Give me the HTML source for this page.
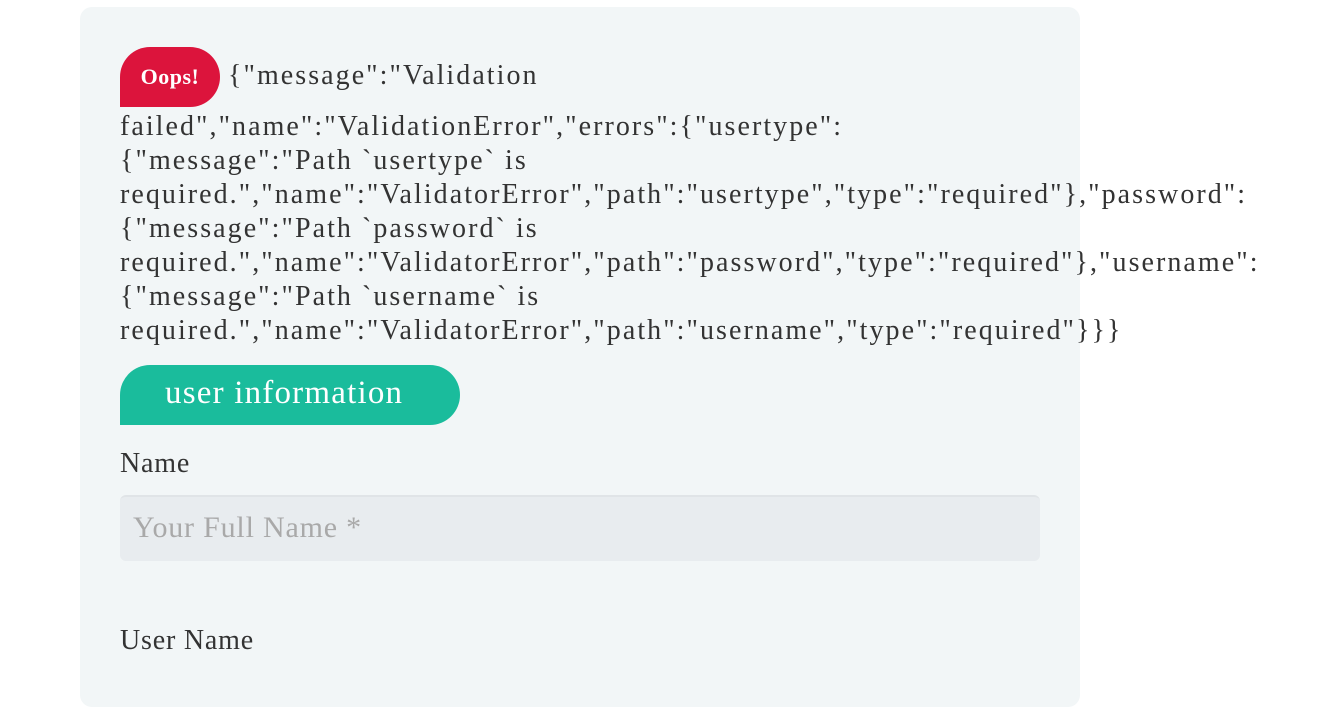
<!DOCTYPE html>
<html><head><meta charset="utf-8"><style>
html,body{margin:0;background:#fff;width:1323px;height:645px;overflow:hidden;font-family:"Liberation Serif",serif;color:#333;}
.card{position:absolute;left:80px;top:7px;width:1000px;height:700px;background:#f2f6f7;border-radius:12px;}
.t{position:absolute;left:120px;font-size:28px;letter-spacing:2.05px;white-space:nowrap;line-height:34px;}
.oops{position:absolute;left:120px;top:47px;width:100px;height:60px;background:#dc143c;border-radius:30px 30px 30px 0;color:#fff;font-size:22px;font-weight:bold;line-height:60px;text-align:center;letter-spacing:0.5px;}
.green{position:absolute;left:120px;top:365px;width:340px;height:60px;background:#1abc9c;border-radius:30px 30px 30px 0;color:#fff;font-size:33px;line-height:56px;letter-spacing:1.2px;}
.green span{position:absolute;left:45px;}
.input{position:absolute;left:120px;top:495px;width:920px;height:66px;background:#e8ecef;border-radius:6px;border-top:2px solid #e0e4e7;box-sizing:border-box;}
.ph{position:absolute;left:13px;top:14px;font-size:30px;color:#a9a9a9;letter-spacing:0.8px;white-space:nowrap;}
</style></head><body>
<div class="card"></div>
<div class="oops">Oops!</div>
<div class="t" style="left:228px;top:59px">{"message":"Validation</div>
<div class="t" style="top:110px">failed","name":"ValidationError","errors":{"usertype":</div>
<div class="t" style="top:144px">{"message":"Path `usertype` is</div>
<div class="t" style="top:178px">required.","name":"ValidatorError","path":"usertype","type":"required"},"password":</div>
<div class="t" style="top:212px">{"message":"Path `password` is</div>
<div class="t" style="top:246px">required.","name":"ValidatorError","path":"password","type":"required"},"username":</div>
<div class="t" style="top:280px">{"message":"Path `username` is</div>
<div class="t" style="top:314px">required.","name":"ValidatorError","path":"username","type":"required"}}}</div>
<div class="green"><span>user information</span></div>
<div class="t" style="top:447px;letter-spacing:0.8px">Name</div>
<div class="input"><div class="ph">Your Full Name *</div></div>
<div class="t" style="top:624px;letter-spacing:0.8px">User Name</div>
</body></html>
